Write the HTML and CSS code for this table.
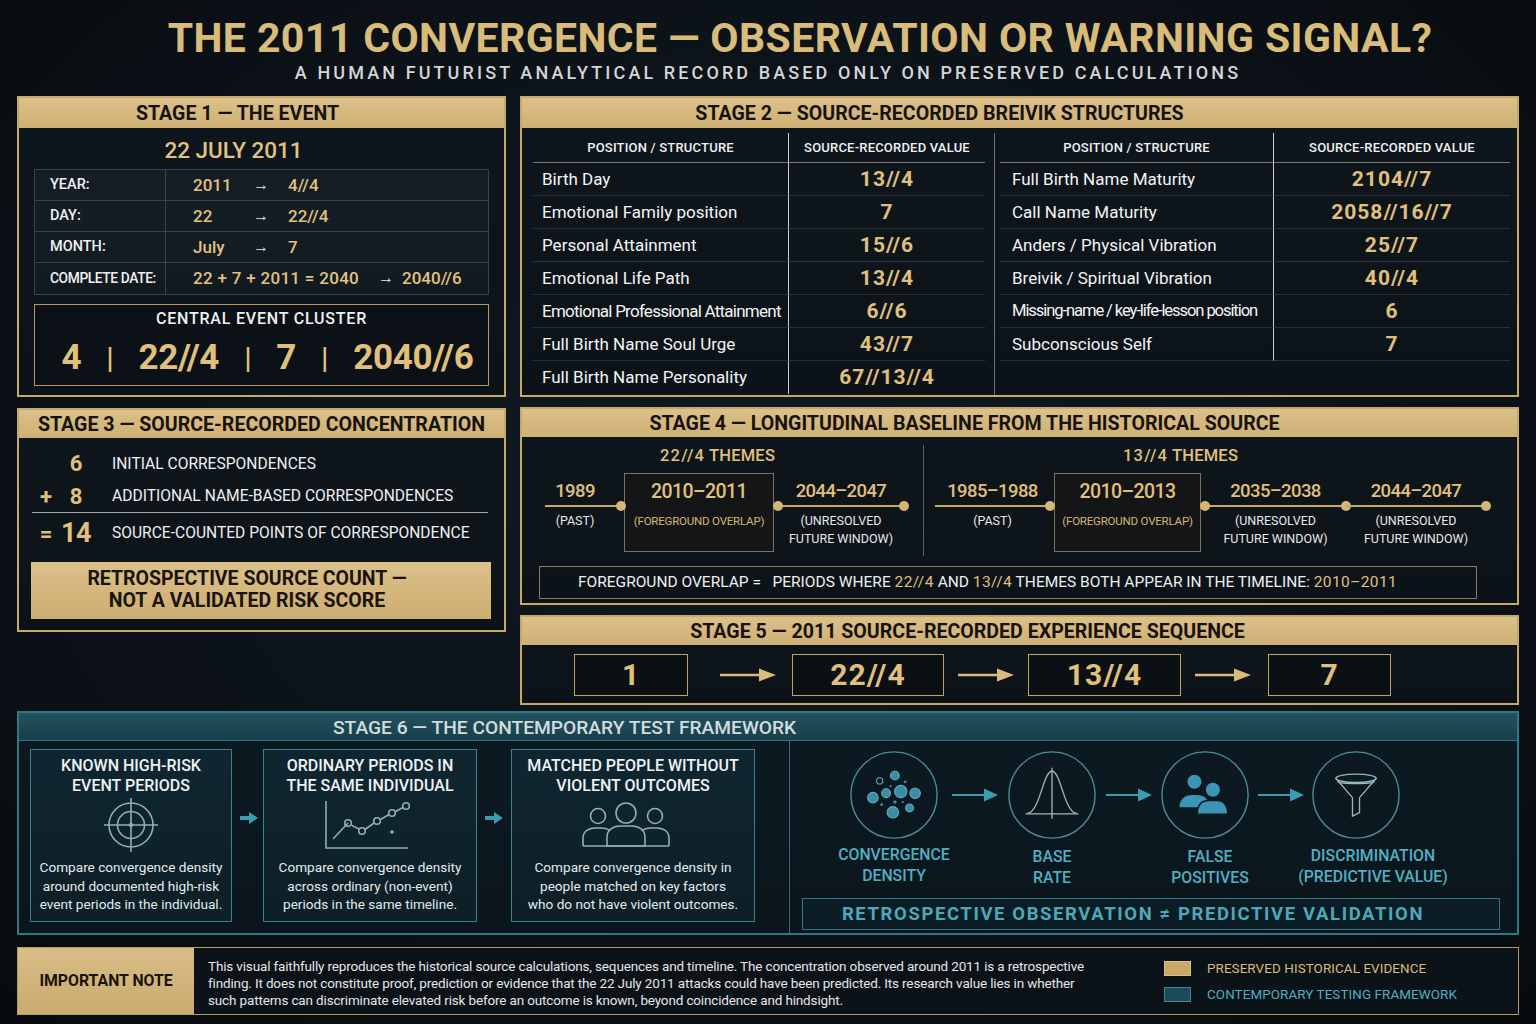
FILE: index.html
```html
<!DOCTYPE html>
<html lang="en">
<head>
<meta charset="utf-8">
<title>The 2011 Convergence</title>
<link rel="stylesheet" href="styles.css">
</head>
<body>
<div class="page">
  <h1 class="title">THE 2011 CONVERGENCE — OBSERVATION OR WARNING SIGNAL?</h1>
  <p class="subtitle">A HUMAN FUTURIST ANALYTICAL RECORD BASED ONLY ON PRESERVED CALCULATIONS</p>

  <div class="grid">
    <div class="col col-left">
      <section class="panel s1">
        <div class="phead h30 sh1">STAGE 1 — THE EVENT</div>
        <div class="s1-date">22 JULY 2011</div>
        <div class="dtable">
          <div class="dl">YEAR:</div>
          <div class="dv"><span class="v1">2011</span><span class="arr">→</span><span class="v2">4//4</span></div>
          <div class="dl">DAY:</div>
          <div class="dv"><span class="v1">22</span><span class="arr">→</span><span class="v2">22//4</span></div>
          <div class="dl">MONTH:</div>
          <div class="dv"><span class="v1">July</span><span class="arr">→</span><span class="v2">7</span></div>
          <div class="dl cond">COMPLETE DATE:</div>
          <div class="dv"><span class="v1 wide">22 + 7 + 2011 = 2040</span><span class="arr short">→</span><span class="v2">2040//6</span></div>
        </div>
        <div class="cluster">
          <div class="cl-label">CENTRAL EVENT CLUSTER</div>
          <div class="cl-nums"><span>4</span><span class="bar">|</span><span>22//4</span><span class="bar">|</span><span>7</span><span class="bar">|</span><span>2040//6</span></div>
        </div>
      </section>

      <section class="panel s3">
        <div class="phead h28">STAGE 3 — SOURCE-RECORDED CONCENTRATION</div>
        <div class="crow r1"><span class="sign"></span><span class="cnum">6</span><span class="clab">INITIAL CORRESPONDENCES</span></div>
        <div class="crow r2"><span class="sign">+</span><span class="cnum">8</span><span class="clab">ADDITIONAL NAME-BASED CORRESPONDENCES</span></div>
        <div class="cline"></div>
        <div class="crow r3"><span class="sign">=</span><span class="cnum big">14</span><span class="clab">SOURCE-COUNTED POINTS OF CORRESPONDENCE</span></div>
        <div class="goldbox">RETROSPECTIVE SOURCE COUNT —<br>NOT A VALIDATED RISK SCORE</div>
      </section>
    </div>

    <div class="col col-right">
      <section class="panel s2">
        <div class="phead h30 sh2">STAGE 2 — SOURCE-RECORDED BREIVIK STRUCTURES</div>
        <div class="s2-body">
          <div class="tbl tl">
            <div class="th">POSITION / STRUCTURE</div><div class="th">SOURCE-RECORDED VALUE</div>
            <div class="td">Birth Day</div><div class="tv">13//4</div>
            <div class="td">Emotional Family position</div><div class="tv">7</div>
            <div class="td">Personal Attainment</div><div class="tv">15//6</div>
            <div class="td">Emotional Life Path</div><div class="tv">13//4</div>
            <div class="td cond">Emotional Professional Attainment</div><div class="tv">6//6</div>
            <div class="td">Full Birth Name Soul Urge</div><div class="tv">43//7</div>
            <div class="td last">Full Birth Name Personality</div><div class="tv last">67//13//4</div>
          </div>
          <div class="vsep"></div>
          <div class="tbl tr">
            <div class="th">POSITION / STRUCTURE</div><div class="th">SOURCE-RECORDED VALUE</div>
            <div class="td">Full Birth Name Maturity</div><div class="tv">2104//7</div>
            <div class="td">Call Name Maturity</div><div class="tv">2058//16//7</div>
            <div class="td">Anders / Physical Vibration</div><div class="tv">25//7</div>
            <div class="td">Breivik / Spiritual Vibration</div><div class="tv">40//4</div>
            <div class="td cond2">Missing-name / key-life-lesson position</div><div class="tv">6</div>
            <div class="td">Subconscious Self</div><div class="tv">7</div>
          </div>
        </div>
      </section>

      <section class="panel s4">
        <div class="phead h28 sh4">STAGE 4 — LONGITUDINAL BASELINE FROM THE HISTORICAL SOURCE</div>
        <div class="s4-body">
          <div class="tgroup g1">
            <div class="themes"><span class="tn">22//4</span> THEMES</div>
            <div class="tline">
              <div class="titem w1989 dot-r">
                <div class="yr pr">1989</div>
                <div class="ln"></div>
                <div class="cap pr">(PAST)</div>
              </div>
              <div class="tbox b1">
                <div class="yr">2010–2011</div>
                <div class="bcap">(FOREGROUND OVERLAP)</div>
              </div>
              <div class="titem w2044a dot-l dot-r">
                <div class="yr">2044–2047</div>
                <div class="ln"></div>
                <div class="cap">(UNRESOLVED<br>FUTURE WINDOW)</div>
              </div>
            </div>
          </div>
          <div class="tgroup g2">
            <div class="themes"><span class="tn">13//4</span> THEMES</div>
            <div class="tline">
              <div class="titem w1985 dot-r">
                <div class="yr">1985–1988</div>
                <div class="ln"></div>
                <div class="cap">(PAST)</div>
              </div>
              <div class="tbox b2">
                <div class="yr">2010–2013</div>
                <div class="bcap">(FOREGROUND OVERLAP)</div>
              </div>
              <div class="titem w2035 dot-l dot-r">
                <div class="yr">2035–2038</div>
                <div class="ln"></div>
                <div class="cap">(UNRESOLVED<br>FUTURE WINDOW)</div>
              </div>
              <div class="titem w2044b dot-r">
                <div class="yr">2044–2047</div>
                <div class="ln"></div>
                <div class="cap">(UNRESOLVED<br>FUTURE WINDOW)</div>
              </div>
            </div>
          </div>
        </div>
        <div class="overlap">FOREGROUND OVERLAP =&nbsp;&nbsp; PERIODS WHERE <span class="g">22//4</span> AND <span class="g">13//4</span> THEMES BOTH APPEAR IN THE TIMELINE: <span class="g">2010–2011</span></div>
      </section>

      <section class="panel s5">
        <div class="phead h28 sh5">STAGE 5 — 2011 SOURCE-RECORDED EXPERIENCE SEQUENCE</div>
        <div class="seq">
          <div class="sbox q1">1</div>
          <svg class="sarr a1" width="56" height="16" viewBox="0 0 56 16"><path d="M0 8H42" stroke="#d9bb7c" stroke-width="2.6"/><path d="M39 1.5L56 8L39 14.5Z" fill="#d9bb7c"/></svg>
          <div class="sbox q2">22//4</div>
          <svg class="sarr a2" width="56" height="16" viewBox="0 0 56 16"><path d="M0 8H42" stroke="#d9bb7c" stroke-width="2.6"/><path d="M39 1.5L56 8L39 14.5Z" fill="#d9bb7c"/></svg>
          <div class="sbox q3">13//4</div>
          <svg class="sarr a3" width="56" height="16" viewBox="0 0 56 16"><path d="M0 8H42" stroke="#d9bb7c" stroke-width="2.6"/><path d="M39 1.5L56 8L39 14.5Z" fill="#d9bb7c"/></svg>
          <div class="sbox q4">7</div>
        </div>
      </section>
    </div>
  </div>

  <section class="panel teal s6">
    <div class="thead">STAGE 6 — THE CONTEMPORARY TEST FRAMEWORK</div>
    <div class="s6-body">
      <div class="s6-left">
        <div class="card c1">
          <div class="ctitle">KNOWN HIGH-RISK<br>EVENT PERIODS</div>
          <div class="cicon">
            <svg width="60" height="60" viewBox="0 0 60 60" fill="none" stroke="#8db0b5" stroke-width="1.6">
              <circle cx="30" cy="30" r="22"/>
              <circle cx="30" cy="30" r="13.5"/>
              <path d="M30 3V57M3 30H57"/>
              <circle cx="30" cy="30" r="2.2" fill="#8db0b5" stroke="none"/>
            </svg>
          </div>
          <div class="cdesc">Compare convergence density<br>around documented high-risk<br>event periods in the individual.</div>
        </div>
        <svg class="carr" width="18" height="14" viewBox="0 0 18 14"><path d="M0 5H9V1L18 7L9 13V9H0Z" fill="#3a9bb1"/></svg>
        <div class="card c2">
          <div class="ctitle">ORDINARY PERIODS IN<br>THE SAME INDIVIDUAL</div>
          <div class="cicon">
            <svg width="90" height="54" viewBox="0 0 90 54" fill="none" stroke="#8db0b5" stroke-width="1.6">
              <path d="M4 3V50H86"/>
              <path d="M11 41L26 25M29.5 27.2L37 31M43 31.5L52 25M58.5 21.5L67 16.5M73.5 13.5L81 9.5"/>
              <circle cx="26" cy="25" r="3.3"/>
              <circle cx="40" cy="33" r="3.3"/>
              <circle cx="55" cy="23" r="3.3"/>
              <circle cx="70" cy="15" r="3.3"/>
              <circle cx="84" cy="8" r="3.3"/>
              <circle cx="70" cy="34" r="1.8" fill="#8db0b5" stroke="none"/>
            </svg>
          </div>
          <div class="cdesc">Compare convergence density<br>across ordinary (non-event)<br>periods in the same timeline.</div>
        </div>
        <svg class="carr" width="18" height="14" viewBox="0 0 18 14"><path d="M0 5H9V1L18 7L9 13V9H0Z" fill="#3a9bb1"/></svg>
        <div class="card c3">
          <div class="ctitle">MATCHED PEOPLE WITHOUT<br>VIOLENT OUTCOMES</div>
          <div class="cicon">
            <svg width="92" height="50" viewBox="0 0 92 50" fill="none" stroke="#8db0b5" stroke-width="1.6">
              <circle cx="18" cy="16" r="7.5"/>
              <circle cx="46" cy="13" r="10"/>
              <circle cx="75" cy="16" r="7.5"/>
              <path d="M3 46V38C3 32 8 28 15 28H21C25 28 28 29 30 31"/>
              <path d="M27 46V37C27 30 33 26 40 26H52C59 26 65 30 65 37V46Z"/>
              <path d="M62 31C64 29 67 28 71 28H77C84 28 89 32 89 38V46"/>
              <path d="M3 46H89"/>
            </svg>
          </div>
          <div class="cdesc">Compare convergence density in<br>people matched on key factors<br>who do not have violent outcomes.</div>
        </div>
      </div>
      <div class="s6-right">
        <div class="steps">
          <div class="step">
            <svg class="circ" width="88" height="88" viewBox="0 0 100 100">
              <circle cx="50" cy="50" r="49" fill="none" stroke="#4e8c95" stroke-width="1.6"/>
              <g fill="#3c8ca4" stroke="#62aec2" stroke-width="1.2">
                <circle cx="33.7" cy="34" r="3.5" fill="none"/>
                <circle cx="51" cy="28" r="5"/>
                <circle cx="26" cy="53" r="6"/>
                <circle cx="41" cy="48" r="5"/>
                <circle cx="57.7" cy="46" r="7"/>
                <circle cx="74" cy="48" r="6"/>
                <circle cx="67.7" cy="64.7" r="4.5"/>
                <circle cx="48.7" cy="69.7" r="6.5"/>
              </g>
              <g fill="#3c8ca4">
                <circle cx="62.7" cy="35" r="1.6"/>
                <circle cx="36" cy="61" r="1.6"/>
                <circle cx="51" cy="58" r="2"/>
                <circle cx="46" cy="40" r="1.3"/>
                <circle cx="60" cy="58" r="1.3"/>
              </g>
            </svg>
            <div class="slabel">CONVERGENCE<br>DENSITY</div>
          </div>
          <svg class="tarr t1" width="46" height="16" viewBox="0 0 46 16"><path d="M0 8H34" stroke="#3a9bb1" stroke-width="2.2"/><path d="M32 1.5L46 8L32 14.5Z" fill="#3a9bb1"/></svg>
          <div class="step">
            <svg class="circ" width="88" height="88" viewBox="0 0 100 100">
              <circle cx="50" cy="50" r="49" fill="none" stroke="#4e8c95" stroke-width="1.6"/>
              <g fill="none" stroke="#9ab8bc" stroke-width="1.5">
                <path d="M22 71C36 70 40 23 50 23C60 23 64 70 78 71"/>
                <path d="M20 71.5H80"/>
                <path d="M50 19V77"/>
              </g>
            </svg>
            <div class="slabel sl2">BASE<br>RATE</div>
          </div>
          <svg class="tarr t2" width="46" height="16" viewBox="0 0 46 16"><path d="M0 8H34" stroke="#3a9bb1" stroke-width="2.2"/><path d="M32 1.5L46 8L32 14.5Z" fill="#3a9bb1"/></svg>
          <div class="step">
            <svg class="circ" width="88" height="88" viewBox="0 0 100 100">
              <circle cx="50" cy="50" r="49" fill="none" stroke="#4e8c95" stroke-width="1.6"/>
              <g fill="#3b96b5">
                <circle cx="38" cy="35" r="8"/>
                <path d="M21 64C21 55 27 50 35 50H41C49 50 55 55 55 64Z"/>
                <circle cx="59" cy="44" r="9" stroke="#0d1b23" stroke-width="2"/>
                <path d="M41 72C41 61 47 56 55 56H63C71 56 76 61 76 72Z" stroke="#0d1b23" stroke-width="2"/>
              </g>
            </svg>
            <div class="slabel sl3">FALSE<br>POSITIVES</div>
          </div>
          <svg class="tarr t3" width="46" height="16" viewBox="0 0 46 16"><path d="M0 8H34" stroke="#3a9bb1" stroke-width="2.2"/><path d="M32 1.5L46 8L32 14.5Z" fill="#3a9bb1"/></svg>
          <div class="step">
            <svg class="circ" width="88" height="88" viewBox="0 0 100 100">
              <circle cx="50" cy="50" r="49" fill="none" stroke="#4e8c95" stroke-width="1.6"/>
              <g fill="none" stroke="#9ab8bc" stroke-width="1.5">
                <ellipse cx="50" cy="31" rx="23" ry="4.8"/>
                <path d="M29 35C30 36 38 37 50 37C62 37 70 36 71 35"/>
                <path d="M27 31L46 53V74L54 70V53L73 31"/>
              </g>
            </svg>
            <div class="slabel sl4">DISCRIMINATION<br>(PREDICTIVE VALUE)</div>
          </div>
        </div>
        <div class="valid">RETROSPECTIVE OBSERVATION ≠ PREDICTIVE VALIDATION</div>
      </div>
    </div>
  </section>

  <section class="note">
    <div class="nlabel">IMPORTANT NOTE</div>
    <div class="ntext">This visual faithfully reproduces the historical source calculations, sequences and timeline. The concentration observed around 2011 is a retrospective<br>finding. It does not constitute proof, prediction or evidence that the 22 July 2011 attacks could have been predicted. Its research value lies in whether<br>such patterns can discriminate elevated risk before an outcome is known, beyond coincidence and hindsight.</div>
    <div class="legend">
      <div class="lrow"><span class="sw gold"></span><span class="lt lg">PRESERVED HISTORICAL EVIDENCE</span></div>
      <div class="lrow"><span class="sw tealsw"></span><span class="lt ltl">CONTEMPORARY TESTING FRAMEWORK</span></div>
    </div>
  </section>
</div>
</body>
</html>
```

FILE: styles.css
```css
* { box-sizing: border-box; }

html, body {
  margin: 0;
  padding: 0;
}

body {
  width: 1536px;
  height: 1024px;
  overflow: hidden;
  background: radial-gradient(ellipse at 50% 45%, #111a22 0%, #0b1117 65%, #070b0f 100%);
  font-family: Roboto, "Noto Sans", "Liberation Sans", sans-serif;
  color: #ececec;
}

.page {
  padding: 0 17px;
}

.title {
  margin: 0;
  padding: 16px 0 0 64px;
  text-align: center;
  font-size: 41px;
  line-height: 44px;
  font-weight: 700;
  color: #d9bb7a;
  letter-spacing: 0.4px;
  white-space: nowrap;
}

.subtitle {
  margin: 2px 0 0;
  text-align: center;
  font-size: 18px;
  line-height: 22px;
  font-weight: 500;
  letter-spacing: 3.1px;
  color: #d3d5d7;
  white-space: nowrap;
}

.grid {
  display: grid;
  grid-template-columns: 489px 999px;
  column-gap: 14px;
  margin-top: 12px;
  align-items: start;
}

.col { display: flex; flex-direction: column; }
.col-left { gap: 11px; }
.col-right { gap: 10px; }

.panel {
  border: 2px solid #c6a869;
  background: linear-gradient(180deg, #0e161d 0%, #0c1318 100%);
}

.phead {
  background: linear-gradient(180deg, #dcc08a 0%, #cfb074 100%);
  color: #17130c;
  font-weight: 700;
  font-size: 19.6px;
  text-align: center;
  white-space: nowrap;
}
.h30 { height: 30px; line-height: 31px; }
.h28 { height: 28px; line-height: 29px; }
.sh1 { padding-right: 48px; }
.sh2 { padding-right: 160px; }
.sh4 { padding-right: 110px; }
.sh5 { padding-right: 104px; }

/* ---------- Stage 1 ---------- */
.s1 { height: 301px; }
.s1-date {
  margin-top: 7px;
  height: 30px;
  line-height: 30px;
  text-align: center;
  padding-right: 56px;
  font-size: 22.5px;
  font-weight: 500;
  color: #e2c27e;
}
.dtable {
  margin: 4px 15px 0;
  display: grid;
  grid-template-columns: 131px 1fr;
  grid-auto-rows: 31px;
  border: 1px solid #3a424a;
  background: linear-gradient(180deg, #151e26 0%, #121a21 100%);
}
.dl, .dv {
  border-bottom: 1px solid #3a424a;
  line-height: 30px;
  white-space: nowrap;
}
.dl:nth-last-child(2), .dv:last-child { border-bottom: none; }
.dl {
  border-right: 1px solid #3a424a;
  padding-left: 15px;
  font-size: 14.5px;
  font-weight: 500;
  color: #f1f1f1;
}
.dl.cond { letter-spacing: -0.4px; font-size: 13.8px; }
.dv {
  padding-left: 27px;
  display: flex;
  font-size: 17px;
  font-weight: 500;
  color: #e2c27e;
}
.v1 { width: 60px; }
.v1.wide { width: 185px; letter-spacing: 0.3px; }
.arr { width: 35px; color: #e6e6e6; font-size: 16px; font-weight: 700; }
.arr.short { width: 24px; }

.cluster {
  margin: 9px 15px 0;
  height: 82px;
  border: 1.5px solid #b8995a;
  background: #0b1116;
}
.cl-label {
  padding-top: 4px;
  line-height: 20px;
  text-align: center;
  font-size: 16px;
  font-weight: 500;
  letter-spacing: 0.8px;
  color: #f0f0f0;
}
.cl-nums {
  margin-top: 9px;
  display: flex;
  justify-content: center;
  gap: 25px;
  line-height: 40px;
  font-size: 35px;
  font-weight: 700;
  color: #e0c07c;
  letter-spacing: -0.3px;
  padding-left: 12px;
}
.cl-nums .bar { font-weight: 500; font-size: 30px; }

/* ---------- Stage 3 ---------- */
.s3 { height: 224px; }
.crow {
  display: grid;
  grid-template-columns: 24px 36px 1fr;
  align-items: center;
  padding-left: 15px;
  white-space: nowrap;
}
.crow.r1 { margin-top: 9px; height: 33px; }
.crow.r2 { height: 32px; }
.crow.r3 { height: 40px; }
.sign {
  text-align: center;
  font-size: 22px;
  font-weight: 700;
  color: #e0c07c;
}
.cnum {
  text-align: center;
  font-size: 22px;
  font-weight: 700;
  color: #e0c07c;
}
.cnum.big { font-size: 27px; letter-spacing: -0.5px; }
.clab {
  margin-left: 18px;
  font-size: 15.6px;
  color: #f0f0f0;
}
.cline {
  height: 1px;
  margin: 0 16px 0 13px;
  background: #a9a9a9;
}
.goldbox {
  margin: 9px 13px 0 12px;
  height: 57px;
  padding-top: 6px;
  background: linear-gradient(180deg, #dcc08a 0%, #cdae72 100%);
  color: #19140c;
  text-align: center;
  padding-right: 28px;
  font-size: 19.5px;
  line-height: 22px;
  font-weight: 700;
  white-space: nowrap;
}

/* ---------- Stage 2 ---------- */
.s2 { height: 301px; }
.s2-body {
  display: flex;
  padding: 5px 7px 0 11px;
}
.vsep {
  width: 1px;
  height: 262px;
  margin: 0 5px 0 9px;
  background: #6f6f6f;
}
.tbl { display: grid; }
.tl { width: 452px; grid-template-columns: 256px 196px; grid-template-rows: 30px repeat(7, 33px); }
.tr { width: 510px; grid-template-columns: 274px 236px; grid-template-rows: 30px repeat(6, 33px); }
.th {
  text-align: center;
  font-size: 13px;
  font-weight: 500;
  line-height: 30px;
  color: #f0f0f0;
  border-bottom: 1px solid #7a7a72;
  letter-spacing: 0.2px;
  white-space: nowrap;
}
.th:nth-child(1) { border-right: 1px solid #cdcdcd; }
.td, .tv {
  border-bottom: 1px solid #2a3139;
  line-height: 32px;
  white-space: nowrap;
}
.td.last, .tv.last { border-bottom: none; }
.td {
  border-right: 1px solid #cdcdcd;
  padding-left: 9px;
  font-size: 17px;
  color: #f4f4f4;
}
.tr .td { padding-left: 12px; }
.td.cond { letter-spacing: -0.75px; }
.td.cond2 { letter-spacing: -1.1px; font-size: 16.6px; }
.tv {
  text-align: center;
  font-size: 21px;
  font-weight: 700;
  color: #e0c07c;
  letter-spacing: 1px;
}

/* ---------- Stage 4 ---------- */
.s4 { height: 198px; }
.s4-body {
  display: flex;
  padding: 8px 0 0 11px;
}
.tgroup { display: flex; flex-direction: column; }
.g1 { width: 391px; border-right: 1px solid #5e5e5e; height: 111px; }
.g2 { width: 580px; }
.themes {
  height: 22px;
  line-height: 22px;
  font-size: 16.5px;
  font-weight: 500;
  color: #e0c07c;
  letter-spacing: 0.2px;
  white-space: nowrap;
}
.g1 .themes { padding-left: 127px; }
.g2 .themes { padding-left: 199px; }
.tn { letter-spacing: 1.2px; }
.tline {
  display: flex;
  margin-top: 6px;
}
.titem {
  position: relative;
  padding-top: 5px;
  text-align: center;
  white-space: nowrap;
}
.yr {
  line-height: 26px;
  font-size: 18.5px;
  font-weight: 500;
  letter-spacing: -0.6px;
  color: #e0c07c;
}
.ln {
  position: relative;
  height: 2px;
  margin-top: 1px;
  background: #c6a869;
}
.cap {
  margin-top: 5px;
  line-height: 18px;
  font-size: 12.5px;
  color: #e8e8e8;
}
.pr { padding-right: 16px; }
.dot-r .ln::after, .dot-l .ln::before {
  content: "";
  position: absolute;
  top: -4px;
  width: 10px;
  height: 10px;
  border-radius: 50%;
  background: #d6b674;
}
.dot-r .ln::after { right: -5px; }
.dot-l .ln::before { left: -5px; }

.w1989 { margin-left: 12px; width: 76px; }
.b1 { margin-left: 3px; width: 150px; }
.w2044a { margin-left: 4px; width: 126px; }
.w1985 { margin-left: 11px; width: 115px; }
.b2 { margin-left: 4px; width: 147px; }
.w2035 { margin-left: 4px; width: 141px; }
.w2044b { width: 140px; }

.tbox {
  height: 79px;
  border: 1px solid #7a735e;
  background: #131517;
  text-align: center;
  padding-top: 5px;
  white-space: nowrap;
}
.tbox .yr { font-size: 19.5px; }
.bcap {
  margin-top: 8px;
  line-height: 16px;
  font-size: 11.5px;
  letter-spacing: -0.2px;
  color: #d6b674;
}
.overlap {
  margin: 10px 0 0 17px;
  width: 938px;
  height: 33px;
  border: 1px solid #8c7b56;
  padding-left: 38px;
  line-height: 31px;
  font-size: 15.5px;
  color: #efefef;
  white-space: nowrap;
}
.overlap .g { color: #e0c07c; letter-spacing: 0.4px; }

/* ---------- Stage 5 ---------- */
.s5 { height: 90px; }
.seq {
  display: flex;
  align-items: center;
  padding: 9px 0 0 52px;
}
.sbox {
  height: 42px;
  border: 1.5px solid #c0a265;
  background: #0b1014;
  text-align: center;
  line-height: 39px;
  font-size: 30px;
  font-weight: 700;
  letter-spacing: 1px;
  color: #e0c07c;
}
.q1 { width: 114px; }
.q2 { width: 152px; }
.q3 { width: 153px; }
.q4 { width: 123px; }
.sarr { display: block; flex: none; }
.a1 { margin: 0 16px 0 32px; }
.a2 { margin: 0 14px 0 14px; }
.a3 { margin: 0 17px 0 14px; }

/* ---------- Stage 6 ---------- */
.teal {
  border-color: #2f7786;
  background: linear-gradient(180deg, #0c1a22 0%, #0b161c 100%);
}
.s6 { margin-top: 6px; height: 224px; }
.thead {
  height: 28px;
  line-height: 29px;
  padding-left: 314px;
  background: linear-gradient(180deg, #22525f 0%, #183f4b 100%);
  border-bottom: 1px solid #2f7786;
  font-size: 19.2px;
  font-weight: 500;
  color: #d2dcdf;
  white-space: nowrap;
}
.s6-body {
  display: flex;
  height: 192px;
}
.s6-left {
  width: 771px;
  display: flex;
  align-items: flex-start;
  padding: 8px 0 0 11px;
  border-right: 1px solid #3b6a74;
}
.card {
  height: 173px;
  border: 1px solid #3b8290;
  background: linear-gradient(180deg, #0f2630 0%, #0d1f27 100%);
  text-align: center;
  padding-top: 6px;
  white-space: nowrap;
}
.c1 { width: 202px; }
.c2 { width: 214px; }
.c3 { width: 244px; }
.carr { display: block; flex: none; margin-top: 62px; }
.c1 + .carr { margin-left: 8px; margin-right: 5px; }
.c2 + .carr { margin-left: 8px; margin-right: 8px; }
.ctitle {
  line-height: 20px;
  font-size: 16px;
  font-weight: 500;
  color: #eef2f3;
}
.cicon {
  height: 58px;
  margin-top: 0;
  display: flex;
  align-items: center;
  justify-content: center;
}
.c2 .cicon svg { margin-left: -6px; }
.c3 .cicon svg { margin-left: -14px; }
.cdesc {
  margin-top: 4px;
  line-height: 18.5px;
  font-size: 13.6px;
  color: #e6eaeb;
}
.s6-right {
  flex: 1;
  padding: 10px 0 0 60px;
}
.steps {
  display: flex;
  align-items: flex-start;
}
.step { width: 88px; flex: none; }
.circ { display: block; }
.slabel {
  width: 170px;
  margin: 5px 0 0 -41px;
  text-align: center;
  line-height: 21px;
  font-size: 15.8px;
  font-weight: 500;
  color: #4fb0c2;
  white-space: nowrap;
}
.sl2 { margin-top: 7px; }
.sl3 { margin-left: -36px; margin-top: 7px; }
.sl4 { margin-left: -24px; margin-top: 6px; }
.tarr { display: block; flex: none; margin-top: 36px; }
.t1 { margin: 36px 10px 0 14px; }
.t2 { margin: 36px 9px 0 10px; }
.t3 { margin: 36px 8px 0 9px; }
.valid {
  margin: 10px 0 0 -48px;
  width: 698px;
  height: 32px;
  border: 1px solid #2f7786;
  background: #0c1c24;
  text-align: center;
  padding-right: 36px;
  line-height: 30px;
  font-size: 18.5px;
  font-weight: 700;
  letter-spacing: 1.6px;
  color: #4aaabb;
  white-space: nowrap;
}

/* ---------- Note ---------- */
.note {
  margin-top: 12px;
  height: 68px;
  border: 1.5px solid #b59a60;
  display: flex;
  background: #0b1218;
}
.nlabel {
  width: 176px;
  flex: none;
  background: linear-gradient(180deg, #d9bd86 0%, #caab70 100%);
  color: #18130b;
  font-weight: 700;
  font-size: 15.8px;
  line-height: 65px;
  text-align: center;
}
.ntext {
  width: 970px;
  flex: none;
  padding: 10px 0 0 14px;
  font-size: 13.5px;
  line-height: 17px;
  letter-spacing: -0.15px;
  color: #e6e6e6;
  white-space: nowrap;
}
.legend {
  padding-top: 13px;
  display: flex;
  flex-direction: column;
  gap: 11px;
}
.lrow { display: flex; align-items: center; gap: 16px; height: 15px; }
.sw { width: 27px; height: 15px; display: block; }
.sw.gold { background: #c9a967; border: 1px solid #dcc28a; }
.sw.tealsw { background: #1c4a57; border: 1px solid #3a8798; }
.lt { font-size: 13.4px; white-space: nowrap; letter-spacing: 0.1px; }
.lg { color: #d9bb7c; }
.ltl { color: #4fb0c2; }
```
